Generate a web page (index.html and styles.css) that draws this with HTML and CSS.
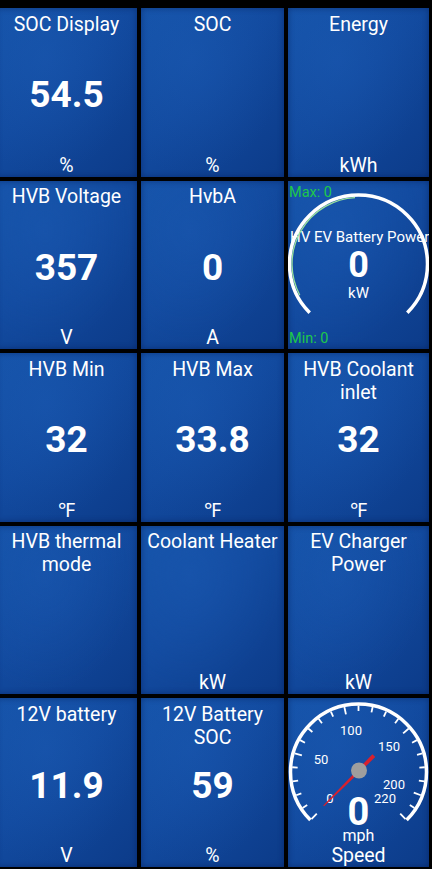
FILE: index.html
```html
<!DOCTYPE html>
<html>
<head>
<meta charset="utf-8">
<link rel="stylesheet" href="styles.css">
</head>
<body>
<div class="grid">
  <div class="tile"><div class="title">SOC Display</div><div class="value">54.5</div><div class="unit">%</div></div>
  <div class="tile"><div class="title">SOC</div><div class="value"></div><div class="unit">%</div></div>
  <div class="tile"><div class="title">Energy</div><div class="value"></div><div class="unit">kWh</div></div>

  <div class="tile"><div class="title">HVB Voltage</div><div class="value">357</div><div class="unit">V</div></div>
  <div class="tile"><div class="title">HvbA</div><div class="value">0</div><div class="unit">A</div></div>
  <div class="tile gauge-tile">
    <div class="gmax">Max: 0</div>
    <div class="gcenter">
      <div class="gtitle">HV EV Battery Power</div>
      <div class="gvalue">0</div>
      <div class="gunit">kW</div>
    </div>
    <div class="gmin">Min: 0</div>
    <svg class="gauge" width="141" height="171" viewBox="0 0 141 171">
      <path d="M11.8 114.2 A66.5 66.5 0 0 1 67 16.6" fill="none" stroke="#9be39b" stroke-width="1.3"/>
      <path d="M21.7 131.8 A69 69 0 1 1 119.3 131.8" fill="none" stroke="#ffffff" stroke-width="3.5"/>
    </svg>
  </div>

  <div class="tile"><div class="title">HVB Min</div><div class="value">32</div><div class="unit">℉</div></div>
  <div class="tile"><div class="title">HVB Max</div><div class="value">33.8</div><div class="unit">℉</div></div>
  <div class="tile"><div class="title">HVB Coolant<br>inlet</div><div class="value">32</div><div class="unit">℉</div></div>

  <div class="tile"><div class="title">HVB thermal<br>mode</div><div class="value"></div><div class="unit"></div></div>
  <div class="tile"><div class="title">Coolant Heater</div><div class="value"></div><div class="unit">kW</div></div>
  <div class="tile"><div class="title">EV Charger<br>Power</div><div class="value"></div><div class="unit">kW</div></div>

  <div class="tile"><div class="title">12V battery</div><div class="value">11.9</div><div class="unit">V</div></div>
  <div class="tile"><div class="title">12V Battery<br>SOC</div><div class="value">59</div><div class="unit">%</div></div>
  <div class="tile speed-tile">
    <svg class="gauge" width="141" height="168" viewBox="0 0 141 168">
      <path d="M22.4 122.1 A68 68 0 1 1 118.6 122.1" fill="none" stroke="#ffffff" stroke-width="3.5"/>
      <g stroke="#ffffff" stroke-width="1.8">
        <line x1="70.5" y1="7.5" x2="70.5" y2="15" transform="rotate(-135 70.5 74)"/>
        <line x1="70.5" y1="7.5" x2="70.5" y2="13" transform="rotate(-122.727 70.5 74)"/>
        <line x1="70.5" y1="7.5" x2="70.5" y2="13" transform="rotate(-110.455 70.5 74)"/>
        <line x1="70.5" y1="7.5" x2="70.5" y2="13" transform="rotate(-98.182 70.5 74)"/>
        <line x1="70.5" y1="7.5" x2="70.5" y2="13" transform="rotate(-85.909 70.5 74)"/>
        <line x1="70.5" y1="7.5" x2="70.5" y2="15" transform="rotate(-73.636 70.5 74)"/>
        <line x1="70.5" y1="7.5" x2="70.5" y2="13" transform="rotate(-61.364 70.5 74)"/>
        <line x1="70.5" y1="7.5" x2="70.5" y2="13" transform="rotate(-49.091 70.5 74)"/>
        <line x1="70.5" y1="7.5" x2="70.5" y2="13" transform="rotate(-36.818 70.5 74)"/>
        <line x1="70.5" y1="7.5" x2="70.5" y2="13" transform="rotate(-24.545 70.5 74)"/>
        <line x1="70.5" y1="7.5" x2="70.5" y2="15" transform="rotate(-12.273 70.5 74)"/>
        <line x1="70.5" y1="7.5" x2="70.5" y2="13" transform="rotate(0 70.5 74)"/>
        <line x1="70.5" y1="7.5" x2="70.5" y2="13" transform="rotate(12.273 70.5 74)"/>
        <line x1="70.5" y1="7.5" x2="70.5" y2="13" transform="rotate(24.545 70.5 74)"/>
        <line x1="70.5" y1="7.5" x2="70.5" y2="13" transform="rotate(36.818 70.5 74)"/>
        <line x1="70.5" y1="7.5" x2="70.5" y2="15" transform="rotate(49.091 70.5 74)"/>
        <line x1="70.5" y1="7.5" x2="70.5" y2="13" transform="rotate(61.364 70.5 74)"/>
        <line x1="70.5" y1="7.5" x2="70.5" y2="13" transform="rotate(73.636 70.5 74)"/>
        <line x1="70.5" y1="7.5" x2="70.5" y2="13" transform="rotate(85.909 70.5 74)"/>
        <line x1="70.5" y1="7.5" x2="70.5" y2="13" transform="rotate(98.182 70.5 74)"/>
        <line x1="70.5" y1="7.5" x2="70.5" y2="15" transform="rotate(110.455 70.5 74)"/>
        <line x1="70.5" y1="7.5" x2="70.5" y2="13" transform="rotate(122.727 70.5 74)"/>
        <line x1="70.5" y1="7.5" x2="70.5" y2="15" transform="rotate(135 70.5 74)"/>
      </g>
      <g class="scale" fill="#ffffff" text-anchor="middle">
        <text x="42" y="104.5">0</text>
        <text x="33" y="65.5">50</text>
        <text x="63" y="36.5">100</text>
        <text x="101" y="52.5">150</text>
        <text x="106" y="91">200</text>
        <text x="97" y="105">220</text>
      </g>
      <polygon points="70.4,22.5 71.6,22.5 73,93.5 69,93.5" fill="#d9202c" transform="rotate(-135 71 72.5)"/>
      <circle cx="71" cy="72.5" r="8" fill="#9e9e9e"/>
    </svg>
    <div class="speed-readout">
      <div class="svalue">0</div>
      <div class="sunit">mph</div>
      <div class="slabel">Speed</div>
    </div>
  </div>
</div>
</body>
</html>
```
FILE: styles.css
```css
html, body {
  margin: 0;
  padding: 0;
  background: #000;
  overflow: hidden;
}
.grid {
  display: grid;
  grid-template-columns: 141px 143px 141px;
  grid-template-rows: repeat(5, 1fr);
  column-gap: 4px;
  row-gap: 4px;
  padding: 8px 3px 2px 0;
  margin-left: -4px;
  width: 436px;
  height: 869px;
  box-sizing: border-box;
  font-family: Roboto, "Noto Sans", sans-serif;
  color: #fff;
}
.tile {
  position: relative;
  overflow: hidden;
  display: grid;
  background:
    radial-gradient(ellipse at 35% 30%, rgba(30, 95, 185, 0.35) 0%, rgba(30, 95, 185, 0) 70%),
    linear-gradient(135deg, #1553a9 0%, #124a9f 45%, #0c3b89 100%);
  box-shadow: inset 0 0 6px rgba(0, 20, 70, 0.45);
}
.tile > * {
  grid-area: 1 / 1;
}
.title {
  align-self: start;
  text-align: center;
  font-size: 19.5px;
  line-height: 23px;
  padding-top: 4.5px;
}
.value {
  align-self: center;
  text-align: center;
  font-size: 37px;
  font-weight: 700;
  line-height: 40px;
  padding-top: 6px;
}
.unit {
  align-self: end;
  text-align: center;
  font-size: 19.5px;
  line-height: 23px;
  padding-bottom: 0;
}
.gauge {
  position: absolute;
  left: 0;
  top: 0;
}
.gmax, .gmin {
  justify-self: start;
  color: #1fc84a;
  font-size: 14.5px;
  line-height: 20px;
  padding-left: 1px;
}
.gmax {
  align-self: start;
  padding-top: 2px;
}
.gmin {
  align-self: end;
  padding-bottom: 0;
}
.gcenter {
  align-self: start;
  display: flex;
  flex-direction: column;
  align-items: center;
  padding-top: 46px;
  min-width: 0;
}
.gtitle {
  font-size: 15px;
  line-height: 20px;
  white-space: nowrap;
  align-self: flex-start;
  padding-left: 2px;
}
.gvalue {
  font-size: 36px;
  font-weight: 700;
  line-height: 34px;
  padding-top: 1px;
}
.gunit {
  font-size: 15px;
  line-height: 20px;
  padding-top: 1px;
}
.scale {
  font-family: Roboto, "Noto Sans", sans-serif;
  font-size: 13px;
}
.speed-readout {
  position: relative;
  align-self: end;
  display: flex;
  flex-direction: column;
  align-items: center;
}
.svalue {
  font-size: 38px;
  font-weight: 700;
  line-height: 30px;
}
.sunit {
  font-size: 16px;
  line-height: 18px;
}
.slabel {
  font-size: 19.5px;
  line-height: 22px;
}
```
